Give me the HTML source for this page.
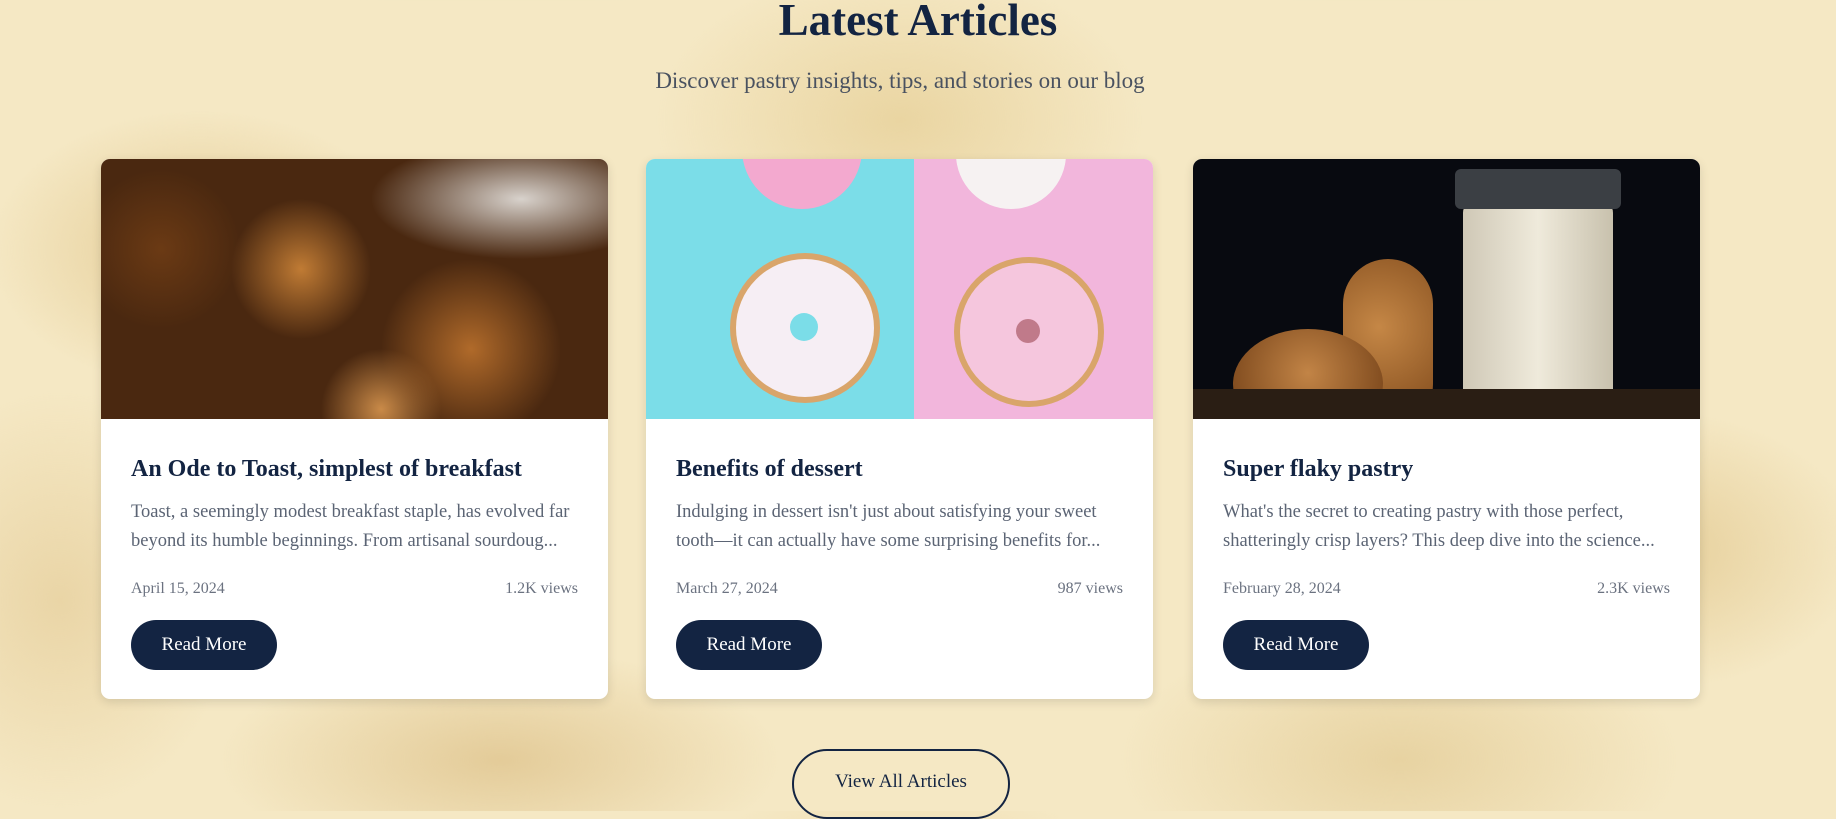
<!DOCTYPE html>
<html><head><meta charset="utf-8"><style>
*{margin:0;padding:0;box-sizing:border-box}
body{width:1836px;height:811px;overflow:hidden;font-family:"Liberation Serif",serif;position:relative;
background:
radial-gradient(ellipse 300px 200px at 200px 250px,rgba(214,180,110,.55),transparent 70%),
radial-gradient(ellipse 350px 220px at 900px 120px,rgba(220,190,120,.45),transparent 70%),
radial-gradient(ellipse 300px 200px at 1650px 550px,rgba(214,180,110,.5),transparent 70%),
radial-gradient(ellipse 400px 160px at 500px 760px,rgba(210,175,110,.5),transparent 70%),
radial-gradient(ellipse 400px 200px at 1400px 760px,rgba(215,185,120,.45),transparent 70%),
radial-gradient(ellipse 250px 300px at 60px 600px,rgba(220,190,130,.45),transparent 70%),
#f5e8c4;}
h1{position:absolute;top:-6px;width:100%;text-align:center;font-size:45px;color:#132442;font-weight:bold}
.sub{position:absolute;top:68px;left:-18px;width:100%;text-align:center;font-size:23px;color:#4a5260}
.card{position:absolute;top:159px;width:507px;height:540px;background:#fff;border-radius:9px;overflow:hidden;box-shadow:0 3px 10px rgba(0,0,0,.12)}
.img{height:260px;position:relative;overflow:hidden}
.body{padding:0 30px}
.t{margin-top:37px;font-size:24px;font-weight:bold;color:#132442}
.d{margin-top:15px;font-size:18.5px;line-height:29px;color:#5b6474;height:58px;overflow:hidden}
.m{margin-top:24px;display:flex;justify-content:space-between;font-size:16px;color:#6b7280}
.b{margin-top:22px;width:146px;height:50px;border-radius:25px;background:#132442;color:#fff;font-size:19px;display:flex;align-items:center;justify-content:center}
.va{position:absolute;left:792px;top:749px;width:218px;height:70px;border:2.5px solid #132442;border-radius:35px;font-size:19px;color:#132442;text-align:center;padding-top:20px}
</style></head><body>
<h1>Latest Articles</h1>
<div class="sub">Discover pastry insights, tips, and stories on our blog</div>

<div class="card" style="left:101px">
<div class="img" style="background:radial-gradient(circle 70px at 200px 110px,#c07b34,transparent),radial-gradient(circle 90px at 370px 190px,#b06a2a,transparent),radial-gradient(circle 80px at 60px 90px,#6b3a14,transparent),radial-gradient(ellipse 150px 60px at 420px 40px,#d8d2cc,transparent),radial-gradient(circle 60px at 280px 250px,#c98a48,transparent),#4a2810"></div>
<div class="body"><div class="t">An Ode to Toast, simplest of breakfast</div>
<div class="d">Toast, a seemingly modest breakfast staple, has evolved far beyond its humble beginnings. From artisanal sourdoug...</div>
<div class="m"><span>April 15, 2024</span><span>1.2K views</span></div><div class="b">Read More</div></div></div>

<div class="card" style="left:646px">
<div class="img" style="background:linear-gradient(90deg,#7bdde8 0 268px,#f2b6dc 268px)">
<div style="position:absolute;left:84px;top:94px;width:150px;height:150px;border-radius:50%;background:#d9a56a"><div style="position:absolute;inset:6px;border-radius:50%;background:#f6eef4"></div><div style="position:absolute;left:60px;top:60px;width:28px;height:28px;border-radius:50%;background:#7bdde8"></div></div>
<div style="position:absolute;left:308px;top:98px;width:150px;height:150px;border-radius:50%;background:#d9a56a"><div style="position:absolute;inset:6px;border-radius:50%;background:#f5c6dd"></div><div style="position:absolute;left:62px;top:62px;width:24px;height:24px;border-radius:50%;background:#c07a8a"></div></div>
<div style="position:absolute;left:96px;top:-70px;width:120px;height:120px;border-radius:50%;background:#f3a9cf"></div>
<div style="position:absolute;left:310px;top:-60px;width:110px;height:110px;border-radius:50%;background:#f6f2f2"></div>
</div>
<div class="body"><div class="t">Benefits of dessert</div>
<div class="d">Indulging in dessert isn't just about satisfying your sweet tooth—it can actually have some surprising benefits for...</div>
<div class="m"><span>March 27, 2024</span><span>987 views</span></div><div class="b">Read More</div></div></div>

<div class="card" style="left:1193px">
<div class="img" style="background:#080a10">
<div style="position:absolute;left:270px;top:40px;width:150px;height:220px;border-radius:14px;background:linear-gradient(90deg,#cfc8b6,#efeadb,#c8c1ad)"></div>
<div style="position:absolute;left:262px;top:10px;width:166px;height:40px;background:#3b3f44;border-radius:6px"></div>
<div style="position:absolute;left:150px;top:100px;width:90px;height:170px;border-radius:45px;background:radial-gradient(circle at 40% 40%,#c58746,#7a4518)"></div>
<div style="position:absolute;left:40px;top:170px;width:150px;height:110px;border-radius:50%;background:radial-gradient(circle at 50% 40%,#c28446,#6e3c14)"></div>
<div style="position:absolute;left:0;top:230px;width:507px;height:30px;background:#2a1e14"></div>
</div>
<div class="body"><div class="t">Super flaky pastry</div>
<div class="d">What's the secret to creating pastry with those perfect, shatteringly crisp layers? This deep dive into the science...</div>
<div class="m"><span>February 28, 2024</span><span>2.3K views</span></div><div class="b">Read More</div></div></div>

<div class="va">View All Articles</div>
</body></html>
